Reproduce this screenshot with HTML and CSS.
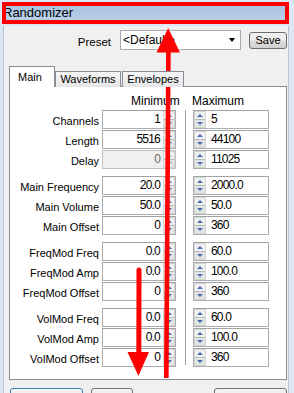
FILE: index.html
```html
<!DOCTYPE html>
<html>
<head>
<meta charset="utf-8">
<title>Randomizer</title>
<link rel="stylesheet" href="styles.css">
</head>
<body>
<div class="window">
  <div class="titlebar">Randomizer</div>
  <div class="client">
    <div class="preset-row">
      <span class="preset-label">Preset</span>
      <div class="combo"><span class="combo-text">&lt;Default&gt;</span><span class="combo-arrow"></span></div>
      <button class="btn save">Save</button>
    </div>
    <div class="tabs">
      <div class="tab active">Main</div>
      <div class="tab wave">Waveforms</div>
      <div class="tab env">Envelopes</div>
    </div>
    <div class="panel">
      <div class="head"><span class="head-min">Minimum</span><span class="head-max">Maximum</span></div>
      <div class="rows">
        <div class="group">
          <div class="row"><span class="label">Channels</span><div class="num min"><span class="val">1</span><span class="spin"><i class="up"></i><i class="down"></i></span></div><div class="num max"><span class="spin"><i class="up"></i><i class="down"></i></span><span class="val">5</span></div></div>
          <div class="row"><span class="label">Length</span><div class="num min"><span class="val">5516</span><span class="spin"><i class="up"></i><i class="down"></i></span></div><div class="num max"><span class="spin"><i class="up"></i><i class="down"></i></span><span class="val">44100</span></div></div>
          <div class="row"><span class="label">Delay</span><div class="num min disabled"><span class="val">0</span><span class="spin"><i class="up"></i><i class="down"></i></span></div><div class="num max"><span class="spin"><i class="up"></i><i class="down"></i></span><span class="val">11025</span></div></div>
        </div>
        <div class="group">
          <div class="row"><span class="label">Main Frequency</span><div class="num min"><span class="val">20.0</span><span class="spin"><i class="up"></i><i class="down"></i></span></div><div class="num max"><span class="spin"><i class="up"></i><i class="down"></i></span><span class="val">2000.0</span></div></div>
          <div class="row"><span class="label">Main Volume</span><div class="num min"><span class="val">50.0</span><span class="spin"><i class="up"></i><i class="down"></i></span></div><div class="num max"><span class="spin"><i class="up"></i><i class="down"></i></span><span class="val">50.0</span></div></div>
          <div class="row"><span class="label">Main Offset</span><div class="num min"><span class="val">0</span><span class="spin"><i class="up"></i><i class="down"></i></span></div><div class="num max"><span class="spin"><i class="up"></i><i class="down"></i></span><span class="val">360</span></div></div>
        </div>
        <div class="group">
          <div class="row"><span class="label">FreqMod Freq</span><div class="num min"><span class="val">0.0</span><span class="spin"><i class="up"></i><i class="down"></i></span></div><div class="num max"><span class="spin"><i class="up"></i><i class="down"></i></span><span class="val">60.0</span></div></div>
          <div class="row"><span class="label">FreqMod Amp</span><div class="num min"><span class="val">0.0</span><span class="spin"><i class="up"></i><i class="down"></i></span></div><div class="num max"><span class="spin"><i class="up"></i><i class="down"></i></span><span class="val">100.0</span></div></div>
          <div class="row"><span class="label">FreqMod Offset</span><div class="num min"><span class="val">0</span><span class="spin"><i class="up"></i><i class="down"></i></span></div><div class="num max"><span class="spin"><i class="up"></i><i class="down"></i></span><span class="val">360</span></div></div>
        </div>
        <div class="group">
          <div class="row"><span class="label">VolMod Freq</span><div class="num min"><span class="val">0.0</span><span class="spin"><i class="up"></i><i class="down"></i></span></div><div class="num max"><span class="spin"><i class="up"></i><i class="down"></i></span><span class="val">60.0</span></div></div>
          <div class="row"><span class="label">VolMod Amp</span><div class="num min"><span class="val">0.0</span><span class="spin"><i class="up"></i><i class="down"></i></span></div><div class="num max"><span class="spin"><i class="up"></i><i class="down"></i></span><span class="val">100.0</span></div></div>
          <div class="row"><span class="label">VolMod Offset</span><div class="num min"><span class="val">0</span><span class="spin"><i class="up"></i><i class="down"></i></span></div><div class="num max"><span class="spin"><i class="up"></i><i class="down"></i></span><span class="val">360</span></div></div>
        </div>
      </div>
    </div>
    <div class="bottom">
      <button class="btn b1"></button>
      <button class="btn b2"></button>
      <button class="btn b3"></button>
    </div>
  </div>
  <div class="mark"></div>
  <svg class="arrows" viewBox="0 0 294 393" width="294" height="393">
    <line x1="168.4" y1="50" x2="166.3" y2="378" stroke="#ff0000" stroke-width="4.6"/>
    <polygon points="168.2,28 156.5,52.5 180,52.5" fill="#ff0000"/>
    <line x1="139" y1="270" x2="138.8" y2="356" stroke="#ff0000" stroke-width="5" stroke-linecap="round"/>
    <polygon points="127.5,352 149,352 138.4,376" fill="#ff0000"/>
  </svg>
</div>
</body>
</html>
```
FILE: styles.css
```css
* { box-sizing: border-box; }
html, body { margin: 0; padding: 0; }
body {
  width: 294px;
  height: 393px;
  overflow: hidden;
  background: #dce7f3;
  font-family: "Liberation Sans", Arial, sans-serif;
  font-size: 11px;
  color: #000;
}
.window { position: relative; height: 393px; padding-top: 2px; }

.titlebar {
  height: 22px;
  margin: 0 5px 0 2px;
  padding-left: 1px;
  background: linear-gradient(#a5c0e0, #bed3eb);
  font-size: 13px;
  line-height: 21px;
  color: #000;
}

.client {
  height: 369px;
  margin: 2px 5px 0 3px;
  padding-top: 4px;
  background: #f0f0f0;
  border-left: 1px solid #b7c5d6;
  border-right: 1px solid #b7c5d6;
}

.preset-row {
  display: flex;
  align-items: center;
  justify-content: flex-end;
  height: 20px;
  padding-right: 1px;
}
.preset-label { margin-right: 9px; padding-top: 3px; font-size: 11.5px; }
.combo {
  width: 121px;
  height: 20px;
  margin-right: 8px;
  padding-left: 2px;
  display: flex;
  align-items: center;
  background: #fff;
  border: 1px solid #abadb3;
  font-size: 12px;
}
.combo-text { flex: 1; white-space: nowrap; }
.combo-arrow {
  width: 0;
  height: 0;
  margin-right: 5px;
  border-left: 3.5px solid transparent;
  border-right: 3.5px solid transparent;
  border-top: 4px solid #000;
}
.btn {
  font-family: "Liberation Sans", Arial, sans-serif;
  font-size: 11px;
  color: #000;
  border: 1px solid #707070;
  border-radius: 3px;
  background: linear-gradient(#f2f2f2 0%, #ebebeb 48%, #dddddd 52%, #cfcfcf 100%);
  padding: 0;
}
.save { width: 38px; height: 17px; line-height: 14px; }

.tabs {
  position: relative;
  z-index: 1;
  display: flex;
  align-items: flex-end;
  height: 21px;
  margin: 16px 0 0 5px;
}
.tab {
  height: 16px;
  border: 1px solid #898c95;
  border-bottom: none;
  background: linear-gradient(#f5f5f5, #e6e6e6);
  text-align: center;
  line-height: 15px;
  white-space: nowrap;
}
.tab.active {
  height: 21px;
  width: 46px;
  background: #fff;
  line-height: 14px;
  padding: 3px 4px 0 0;
}
.tab.wave { width: 66px; }
.tab.env { width: 62px; margin-left: 1px; }

.panel {
  height: 294px;
  margin: -1px 1px 0 5px;
  padding-top: 7px;
  background: #fff;
  border: 1px solid #898c95;
}
.head { display: flex; height: 14px; font-size: 12px; line-height: 14px; }
.head-min { margin-left: 121px; width: 61px; }

.rows {
  margin-top: 2px;
  background: linear-gradient(#a0a0a0, #a0a0a0) no-repeat 175px 0 / 1px calc(100% - 3px);
}
.group + .group { margin-top: 6px; }
.row { display: flex; height: 20px; }
.label {
  width: 89px;
  height: 19px;
  margin-right: 3px;
  padding-top: 4px;
  text-align: right;
  line-height: 14px;
  white-space: nowrap;
}
.num {
  display: flex;
  height: 19px;
  background: #fff;
  border: 1px solid #abadb3;
  border-top-color: #a3a3a3;
}
.num.min { width: 74px; }
.num.max { width: 76px; margin-left: 17px; }
.val {
  flex: 1;
  font-family: "Liberation Sans", Arial, sans-serif;
  font-size: 12px;
  letter-spacing: -0.8px;
  line-height: 16px;
  white-space: nowrap;
}
.min .val { text-align: right; padding-right: 3px; }
.max .val { padding-left: 5px; }

.spin {
  width: 12px;
  display: flex;
  flex-direction: column;
  background: #ececec;
  border: 1px solid #d4d4d4;
}
.spin i {
  flex: 1;
  display: flex;
  align-items: center;
  justify-content: center;
}
.spin i.up { border-bottom: 1px solid #b9b9b9; background: #f1f1f1; }
.spin i.down { background: #e4e4e4; }
.spin i.up::before {
  content: "";
  border-left: 3px solid transparent;
  border-right: 3px solid transparent;
  border-bottom: 3px solid #4d67b0;
}
.spin i.down::before {
  content: "";
  border-left: 3px solid transparent;
  border-right: 3px solid transparent;
  border-top: 3px solid #4d67b0;
}
.num.disabled { background: #f0f0f0; border-color: #c2c2c2; }
.num.disabled .val { color: #6d6d6d; }
.num.disabled .spin i.up::before { border-bottom-color: #a8a8a8; }
.num.disabled .spin i.down::before { border-top-color: #a8a8a8; }

.bottom { display: flex; margin-top: 8px; padding-right: 1px; }
.b1 { width: 73px; height: 23px; margin-left: 6px; border-color: #3c7fb1; }
.b2 { width: 42px; height: 23px; margin-left: 8px; }
.b3 { width: 73px; height: 23px; margin-left: auto; }

.mark {
  position: absolute;
  left: 2px;
  top: 2px;
  width: 287px;
  height: 22px;
  border: 4px solid #ff0000;
}
.arrows { position: absolute; left: 0; top: 0; pointer-events: none; }
```
